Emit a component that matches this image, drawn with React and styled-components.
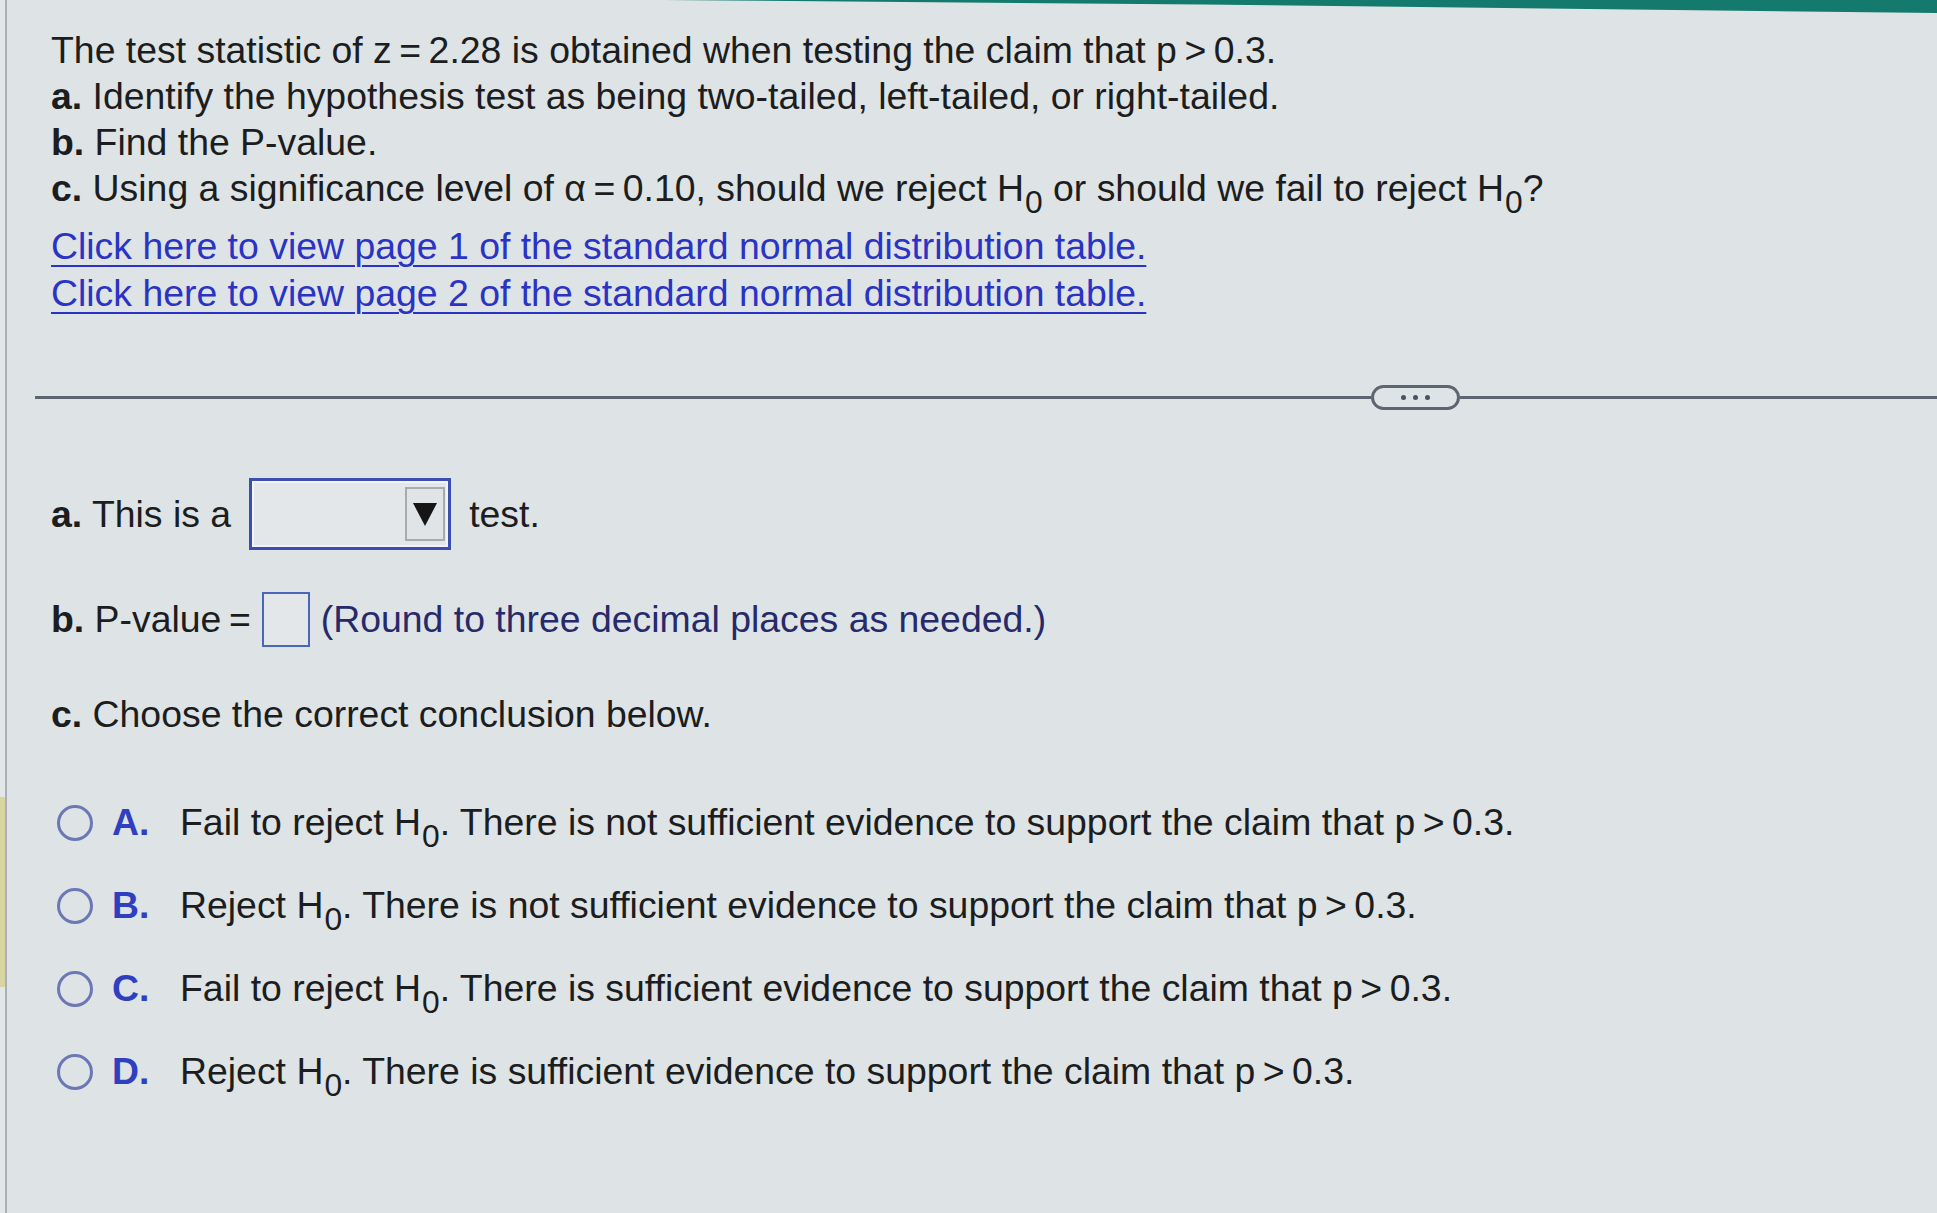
import React from "react"
import styled, { createGlobalStyle } from "styled-components"

const GlobalStyle = createGlobalStyle`
  html, body {
    margin: 0;
    padding: 0;
    background: #e4e7e8;
  }
  body {
    font-family: "Liberation Sans", Arial, sans-serif;
    color: #1b1d20;
  }
`

const Screen = styled.div`
  min-height: 100vh;
  padding-left: 5px;
  display: flex;
  background: linear-gradient(
    to bottom,
    #e4e7e8 0,
    #e4e7e8 797px,
    #d8d5a0 797px,
    #d8d5a0 987px,
    #e4e7e8 987px
  );
`

const Frame = styled.main`
  flex: 1;
  border-left: 2px solid #a9b0b6;
  background: #dee3e5;
  display: flex;
  flex-direction: column;
`

const TopBar = styled.div`
  height: 13px;
  background: #137a6d;
  clip-path: polygon(34% 0, 100% 0, 100% 100%, 62% 35%);
`

const Question = styled.div`
  padding: 14px 0 0 44px;
  font-size: 37.4px;
  line-height: 46px;
`

const Line = styled.div``

const Bold = styled.b`
  font-weight: 700;
`

const Sub = styled.sub`
  font-size: 0.85em;
  line-height: 0;
  vertical-align: -0.38em;
  margin-left: 1px;
`

const Links = styled.div`
  margin-top: 12px;
  display: flex;
  flex-direction: column;
  align-items: flex-start;
`

const Link = styled.a`
  color: #2a33c4;
  line-height: 47px;
  text-decoration: underline;
  text-decoration-thickness: 2px;
  text-underline-offset: 6px;
  cursor: pointer;
`

const Divider = styled.div`
  display: flex;
  align-items: center;
  margin: 68px 0 0 28px;
`

const Rule = styled.div`
  height: 3px;
  background: #5d6571;
  flex: ${(p) => (p.$grow ? "1" : "0 0 477px")};
`

const More = styled.div`
  width: 89px;
  height: 25px;
  box-sizing: border-box;
  border: 3px solid #5d6571;
  border-radius: 13px;
  display: flex;
  align-items: center;
  justify-content: center;
  gap: 7px;
`

const Dot = styled.span`
  width: 5px;
  height: 5px;
  border-radius: 50%;
  background: #4a5260;
`

const Answers = styled.div`
  padding-left: 44px;
  font-size: 37.4px;
  display: flex;
  flex-direction: column;
`

const Row = styled.div`
  display: flex;
  align-items: center;
  gap: ${(p) => p.$gap || 18}px;
  min-height: ${(p) => p.$height || 46}px;
  margin-top: ${(p) => p.$top || 0}px;
`

const Select = styled.div`
  width: 202px;
  height: 72px;
  box-sizing: border-box;
  border: 3px solid #3d4fae;
  box-shadow: inset 0 0 0 2px #f1f4f6;
  background: #e3e7e9;
  display: flex;
  align-items: center;
  justify-content: flex-end;
  padding-right: 3px;
`

const SelectButton = styled.div`
  width: 40px;
  height: 54px;
  box-sizing: border-box;
  border: 2px solid #a6abb0;
  background: #e0e4e6;
  display: flex;
  align-items: center;
  justify-content: center;
`

const InputBox = styled.div`
  width: 48px;
  height: 55px;
  box-sizing: border-box;
  border: 2px solid #4a66b8;
  background: #e3e7e9;
`

const Note = styled.span`
  color: #262a6a;
`

const Options = styled.div`
  margin-top: 44px;
  display: flex;
  flex-direction: column;
`

const Option = styled.label`
  display: flex;
  align-items: center;
  height: 83px;
  padding-left: 6px;
  cursor: pointer;
`

const Radio = styled.span`
  width: 36px;
  height: 36px;
  box-sizing: border-box;
  border: 3px solid #6c78b6;
  border-radius: 50%;
  margin-right: 19px;
  flex: none;
`

const Letter = styled.span`
  width: 68px;
  font-weight: 700;
  color: #2f3fbf;
  flex: none;
`

const H0 = () => (
  <>
    H<Sub>0</Sub>
  </>
)

const options = [
  ["A.", "Fail to reject", "There is not sufficient evidence to support the claim that p\u2009>\u20090.3."],
  ["B.", "Reject", "There is not sufficient evidence to support the claim that p\u2009>\u20090.3."],
  ["C.", "Fail to reject", "There is sufficient evidence to support the claim that p\u2009>\u20090.3."],
  ["D.", "Reject", "There is sufficient evidence to support the claim that p\u2009>\u20090.3."],
]

const App = () => (
  <Screen>
    <GlobalStyle />
    <Frame>
      <TopBar />
      <Question>
        <Line>
          The test statistic of z{"\u2009=\u2009"}2.28 is obtained when testing the claim that p{"\u2009>\u2009"}0.3.
        </Line>
        <Line>
          <Bold>a.</Bold> Identify the hypothesis test as being two-tailed, left-tailed, or right-tailed.
        </Line>
        <Line>
          <Bold>b.</Bold> Find the P-value.
        </Line>
        <Line>
          <Bold>c.</Bold> Using a significance level of α{"\u2009=\u2009"}0.10, should we reject <H0 /> or should
          we fail to reject <H0 />?
        </Line>
        <Links>
          <Link>Click here to view page 1 of the standard normal distribution table.</Link>
          <Link>Click here to view page 2 of the standard normal distribution table.</Link>
        </Links>
      </Question>

      <Divider>
        <Rule $grow />
        <More>
          <Dot />
          <Dot />
          <Dot />
        </More>
        <Rule />
      </Divider>

      <Answers>
        <Row $top={68} $height={72}>
          <span>
            <Bold>a.</Bold> This is a
          </span>
          <Select>
            <SelectButton>
              <svg width="26" height="26" viewBox="0 0 26 26">
                <polygon points="1,2 25,2 13,25" fill="#151515" />
              </svg>
            </SelectButton>
          </Select>
          <span>test.</span>
        </Row>
        <Row $top={42} $height={55} $gap={11}>
          <span>
            <Bold>b.</Bold> P-value{"\u2009"}=
          </span>
          <InputBox />
          <Note>(Round to three decimal places as needed.)</Note>
        </Row>
        <Row $top={44}>
          <span>
            <Bold>c.</Bold> Choose the correct conclusion below.
          </span>
        </Row>
        <Options>
          {options.map(([letter, verb, rest]) => (
            <Option key={letter}>
              <Radio />
              <Letter>{letter}</Letter>
              <span>
                {verb} <H0 />. {rest}
              </span>
            </Option>
          ))}
        </Options>
      </Answers>
    </Frame>
  </Screen>
)

export default App
